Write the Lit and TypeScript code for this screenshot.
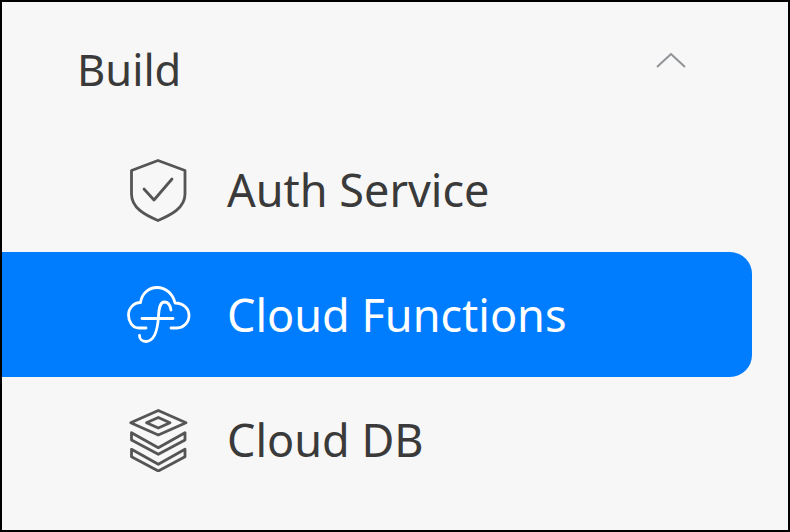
import { LitElement, css, html, svg } from "lit";
import { customElement } from "lit/decorators.js";

const shield = svg`
  <path d="M31 2.5 L58 12.5 V36 C58 50 44 57 31 62.5 C18 57 4.5 50 4.5 36 V12.5 Z" />
  <path d="M17 31 L27 42 L45 21" />
`;

const cloud = svg`
  <path d="M19 45 H12 C5 45 1.5 38 1.5 32 C1.5 25 7 19.5 13.5 19.5 C15 10 22 4.5 30 4.5 C39 4.5 46 11 48 20 C56 20 62 25 62 32.5 C62 40 56 45 50 45 H44" />
  <path d="M44 27 C43 21 40 19 37.5 19 C33 19 32 25 31.5 33 C31 42 29 58 19 58.5 C15 58.5 12.5 56 12.5 52.5" />
  <path d="M15 35.5 H46" />
`;

const layers = svg`
  <path d="M31.3 2.5 L59 14.7 L31.3 27 L3.7 14.7 Z" />
  <path d="M31.3 9.5 L43 14.7 L31.3 20 L19.5 14.7 Z" />
  <path d="M4.5 24.7 L31.3 39.7 L58 24.7 V32 L31.3 46.3 L4.5 32 Z" />
  <path d="M4.5 41.3 L31.3 56.3 L58 41.3 V48.7 L31.3 63 L4.5 48.7 Z" />
`;

const items = [
  { label: "Auth Service", icon: shield, active: false },
  { label: "Cloud Functions", icon: cloud, active: true },
  { label: "Cloud DB", icon: layers, active: false },
];

@customElement("app-root")
export class AppRoot extends LitElement {
  static styles = css`
    :host {
      display: block;
      box-sizing: border-box;
      width: 790px;
      height: 532px;
      border: 2px solid #000;
      background: #f7f7f7;
      font-family: "Noto Sans", "Open Sans", sans-serif;
      color: #3a3a3a;
    }

    .group {
      display: flex;
      align-items: center;
      justify-content: space-between;
      box-sizing: border-box;
      width: 750px;
      height: 125px;
      padding: 10px 66px 0 75px;
      font-size: 43.5px;
      line-height: 1;
    }

    .chevron {
      width: 30px;
      height: 15px;
      margin-bottom: 18px;
      fill: none;
      stroke: #909398;
      stroke-width: 2;
    }

    .item {
      display: flex;
      align-items: center;
      gap: 36px;
      box-sizing: border-box;
      width: 750px;
      height: 125px;
      padding-left: 125px;
      font-size: 45px;
      line-height: 1;
    }

    .item.active {
      background: #007dff;
      color: #fff;
      border-radius: 0 22px 22px 0;
    }

    .icon {
      width: 64px;
      height: 64px;
      flex: none;
      fill: none;
      stroke: #555;
      stroke-width: 2.8;
      stroke-linejoin: round;
      stroke-linecap: round;
    }

    .active .icon {
      stroke: #fff;
    }
  `;

  render() {
    return html`
      <div class="group">
        <span>Build</span>
        <svg class="chevron" viewBox="0 0 30 15">
          <path d="M1 14 L15 1 L29 14" />
        </svg>
      </div>
      ${items.map(
        (item) => html`
          <div class="item ${item.active ? "active" : ""}">
            <svg class="icon" viewBox="0 0 64 64">${item.icon}</svg>
            <span>${item.label}</span>
          </div>
        `
      )}
    `;
  }
}
